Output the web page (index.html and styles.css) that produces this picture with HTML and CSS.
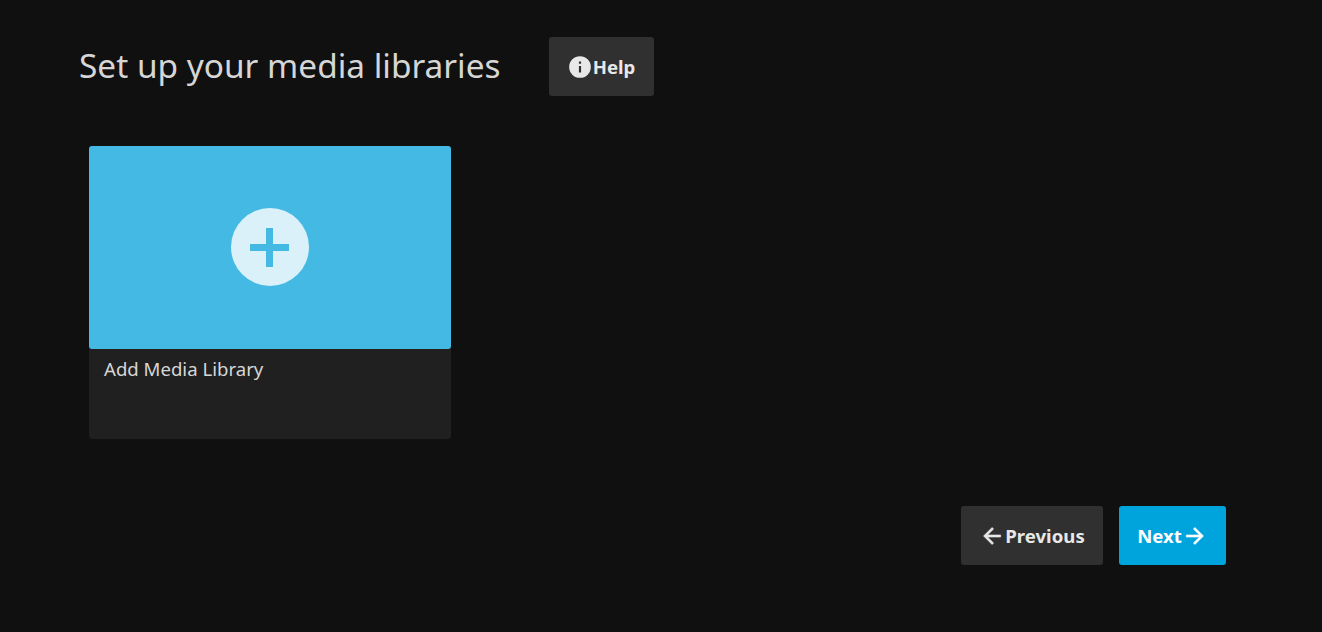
FILE: index.html

```html
<!DOCTYPE html>
<html lang="en">
<head>
  <meta charset="UTF-8" />
  <meta name="viewport" content="width=device-width, initial-scale=1.0" />
  <title>Set up your media libraries</title>
  <link rel="stylesheet" href="styles.css">
</head>
<body>
  <div class="page">
    <div class="title-row">
      <h1>Set up your media libraries</h1>
      <a class="btn btn-help" href="#">
        <svg class="icon" viewBox="0 0 24 24"><path fill="currentColor" d="M13 9h-2V7h2m0 10h-2v-6h2m-1-9A10 10 0 0 0 2 12a10 10 0 0 0 10 10 10 10 0 0 0 10-10A10 10 0 0 0 12 2z"/></svg>
        <span>Help</span>
      </a>
    </div>

    <div class="cards">
      <div class="card">
        <div class="card-image">
          <div class="add-circle">
            <svg class="plus" viewBox="0 0 39 39"><path fill="currentColor" d="M16 0h7v16h16v7H23v16h-7V23H0v-7h16z"/></svg>
          </div>
        </div>
        <div class="card-text">Add Media Library</div>
      </div>
    </div>

    <div class="wizard-nav">
      <a class="btn btn-prev" href="#">
        <svg class="icon arrow" viewBox="0 0 24 24"><path fill="currentColor" d="M20 11v2H8l5.500 5.500-1.420 1.420L4.160 12l7.920-7.920L13.500 5.500 8 11h12z"/></svg>
        <span>Previous</span>
      </a>
      <a class="btn btn-next" href="#">
        <span>Next</span>
        <svg class="icon arrow" viewBox="0 0 24 24"><path fill="currentColor" d="M4 11v2h12l-5.500 5.500 1.420 1.420L19.840 12l-7.920-7.920L10.500 5.500 16 11H4z"/></svg>
      </a>
    </div>
  </div>
</body>
</html>
```

FILE: styles.css

```css
:root {
  --fondo: #101010;
  --gris-boton: #303030;
  --gris-card: #202020;
  --texto: #d6d6d6;
  --azul-card: #44b9e3;
  --azul-boton: #00a4dc;
}
html, body {
  margin: 0;
  height: 100%;
}
body {
  background: var(--fondo);
  color: var(--texto);
  font-family: "Noto Sans", sans-serif;
  overflow: hidden;
}
.page {
  padding: 37px 96px 0 79px;
}
.title-row {
  display: flex;
  align-items: center;
  height: 59px;
}
h1 {
  margin: -2px 48px 0 0;
  font-size: 33.4px;
  font-weight: 400;
  line-height: 59px;
}
.btn {
  display: inline-flex;
  align-items: center;
  justify-content: center;
  height: 59px;
  padding: 0 18px;
  box-sizing: border-box;
  border-radius: 3px;
  background: var(--gris-boton);
  color: #e8e8e8;
  font-size: 18.6px;
  font-weight: 700;
  text-decoration: none;
}
.btn-help {
  width: 105px;
}
.btn-prev {
  width: 142px;
}
.btn-next {
  width: 107px;
  background: var(--azul-boton);
  color: #fff;
}
.icon {
  width: 26px;
  height: 26px;
}
.arrow path {
  stroke: currentColor;
  stroke-width: 0.5;
}
.cards {
  display: flex;
  margin: 50px 0 0 10px;
}
.card {
  width: 362px;
  height: 293px;
  border-radius: 3px;
  background: var(--gris-card);
}
.card-image {
  display: flex;
  align-items: center;
  justify-content: center;
  height: 203px;
  padding-bottom: 1px;
  box-sizing: border-box;
  border-radius: 3px;
  background: var(--azul-card);
}
.add-circle {
  display: flex;
  align-items: center;
  justify-content: center;
  width: 78px;
  height: 78px;
  border-radius: 50%;
  background: #daf1fa;
  color: var(--azul-card);
}
.plus {
  width: 39px;
  height: 39px;
  margin-left: -1px;
}
.card-text {
  padding: 6px 15px;
  font-size: 18.6px;
  line-height: 27px;
}
.wizard-nav {
  display: flex;
  justify-content: flex-end;
  gap: 16px;
  margin-top: 67px;
}
```
